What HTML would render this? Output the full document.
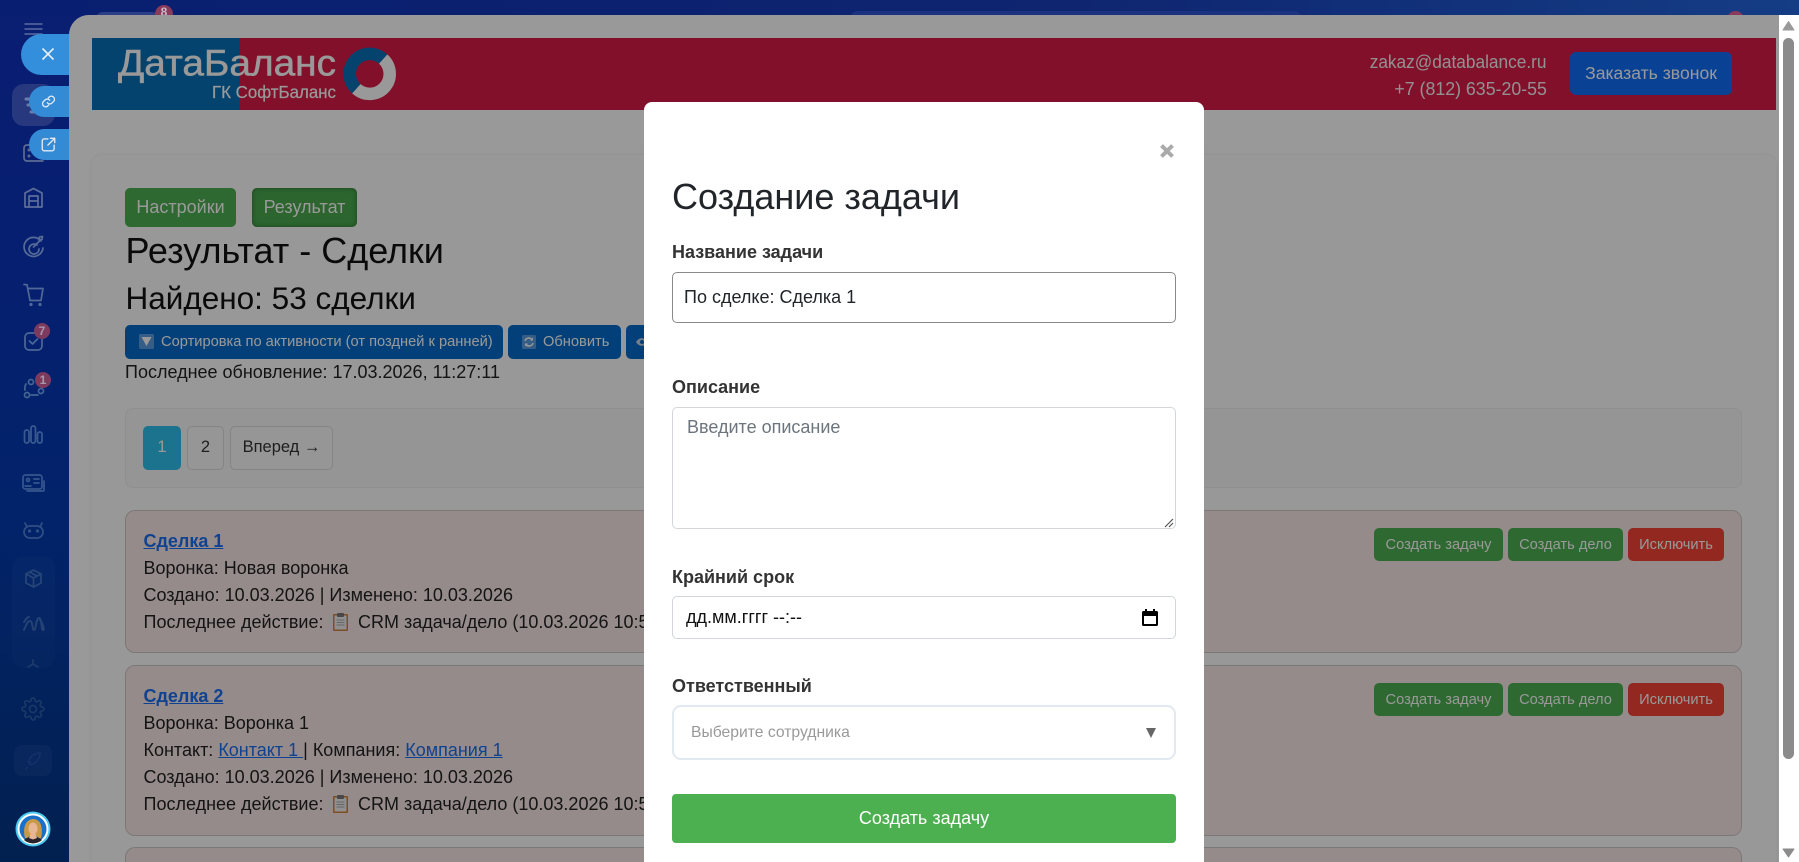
<!DOCTYPE html>
<html lang="ru">
<head>
<meta charset="utf-8">
<title>Создание задачи</title>
<style>
html,body{margin:0;padding:0;width:1799px;height:862px;overflow:hidden;background:#061d6e;font-family:"Liberation Sans",Arial,sans-serif}
*{box-sizing:border-box}
.a{position:absolute;white-space:nowrap}
#bg{position:absolute;left:0;top:0;width:1799px;height:862px;background:linear-gradient(180deg,#0a1e72 0,#061f70 30%,#02236a 60%,#02204f 100%)}
#topglow{position:absolute;left:0;top:0;width:1799px;height:15px;background:linear-gradient(90deg,#081e70 0,#0f2570 60%,#143d85 100%)}
#panel{position:absolute;left:69px;top:15px;width:1710px;height:847px;background:#fff;overflow:hidden;border-top-left-radius:20px}
#in{position:absolute;left:-69px;top:-15px;width:1799px;height:862px}
#ov{position:absolute;left:0;top:0;width:1799px;height:862px;background:rgba(0,0,0,.4)}
.btn{position:absolute;color:#fff;text-align:center;border-radius:5px;font-size:14.67px}
.card{position:absolute;left:125px;width:1617px;background:#fbe8e8;border:1px solid #d0c8c8;border-radius:10px}
.t{position:absolute;white-space:nowrap;color:#222;font-size:18px;line-height:26px;left:143.5px}
.t a,.lnk{color:#1a6ff0;text-decoration:underline}
.g{background:#4caf50}.r{background:#f44336}.bl{background:#066ccb}
.lab{position:absolute;left:672px;font-weight:bold;font-size:18px;line-height:24px;color:#333;white-space:nowrap}
.inp{position:absolute;left:672px;width:504px;background:#fff;border:1px solid #d2d6db;border-radius:5px}
</style>
</head>
<body>
<div id="bg"></div>
<div id="topglow"></div>

<!-- strip items peeking above panel -->
<div class="a" style="left:95px;top:12px;width:65px;height:10px;background:#2b3f86;border-radius:8px 8px 0 0"></div>
<div class="a" style="left:155px;top:5px;width:18px;height:18px;border-radius:50%;background:#8a3a5a;color:#c8b8c8;font-size:12px;font-weight:bold;line-height:15px;text-align:center">8</div>
<div class="a" style="left:850px;top:11px;width:452px;height:8px;background:#1b3280;border-radius:8px 8px 0 0"></div>
<div class="a" style="left:1727px;top:11px;width:17px;height:17px;border-radius:50%;background:#8a3a5a"></div>

<!-- sidebar -->
<svg class="a" style="left:0;top:0" width="69" height="862" viewBox="0 0 69 862">
  <g fill="none" stroke-linecap="round" stroke-linejoin="round" stroke-width="1.7">
    <g stroke="#5a6ca2" stroke-width="1.4"><path d="M25 24h17M25 29h17M25 34h17"/></g>
    <rect x="12" y="84" width="43" height="42" rx="12" fill="#27387f" stroke="none"/>
    <g stroke="#6b7ca8" stroke-width="3"><path d="M26 99h6M28 105h8M31 112h6"/></g>
    <g stroke="#5c6c94">
      <path d="M29 145h-2a3 3 0 0 0-3 3v10a3 3 0 0 0 3 3h16"/><circle cx="29" cy="150" r=".6"/><circle cx="29" cy="156" r=".6"/>
    </g>
    <g stroke="#5d6e98">
      <path d="M25 207v-14l8.500-4.500 8.500 4.500v14H25z"/><path d="M29 207v-11h9v11M29 201h9"/>
    </g>
    <g stroke="#566b97">
      <path d="M41 241a9.500 9.500 0 1 0 2 7"/><path d="M37 245a5 5 0 1 0 2 4"/><path d="M33.500 247l7-7M39 240l.500-3 3-.500-.500 3-3 .500"/>
    </g>
    <g stroke="#516997"><path d="M24 284.500l3 .200 3 15.800h11l2-12H28"/><circle cx="31" cy="304.500" r=".8"/><circle cx="40" cy="304.500" r=".8"/></g>
    <g stroke="#4c6897">
      <rect x="25" y="333" width="17" height="17" rx="4"/><path d="M29.500 341l3 3 5-5"/>
    </g>
    <g stroke="#456494">
      <path d="M26 384a8 8 0 0 0-1 6M31 395h7M42 388a9 9 0 0 0-5-6"/><circle cx="31" cy="382" r="2.500"/><circle cx="27" cy="395" r="2.500"/><circle cx="41" cy="391" r="2.500"/>
    </g>
    <g stroke="#3a5b90">
      <rect x="24.500" y="430" width="4.500" height="13" rx="2.200"/><rect x="31" y="426" width="4.500" height="17" rx="2.200"/><rect x="37.500" y="432" width="4.500" height="11" rx="2.200"/>
    </g>
    <g stroke="#35568c">
      <rect x="23" y="475" width="19" height="14" rx="2.500"/><path d="M44 481v9a1 1 0 0 1-1 1H27"/><circle cx="28" cy="480" r="1.500"/><path d="M25 486h6M34 479h5M34 483h5"/>
    </g>
    <g stroke="#2f4f84">
      <rect x="24" y="526" width="19" height="12" rx="6"/><path d="M27 527l-2-4M40 527l2-4"/><circle cx="29.500" cy="531" r=".8"/><circle cx="37.500" cy="531" r=".8"/>
    </g>
    <rect x="12" y="556" width="43" height="112" rx="12" fill="#fff" fill-opacity=".015" stroke="none"/>
    <g stroke="#264678">
      <path d="M33.500 570l7.500 4v9l-7.500 4-7.500-4v-9z"/><path d="M26 574l7.500 4 7.500-4M33.500 578v9M29.500 572l7.500 4"/>
    </g>
    <g stroke="#254274" stroke-width="2">
      <path d="M24 630c2-4 3-9 6-9s2 9 4 9 2-12 5-12 2 12 4 12-1-8-3-10M24 622c2-3 3-5 5-5"/>
    </g>
    <g stroke="#1c3a6c"><path d="M28 667l5-3 5 3M33 664v-4"/></g>
    <g stroke="#1a3866" transform="translate(21 697)">
      <circle cx="12" cy="12" r="3.500"/>
      <path d="M19.400 15a1.650 1.650 0 0 0 .330 1.820l.060.060a2 2 0 0 1 0 2.830 2 2 0 0 1-2.830 0l-.060-.060a1.650 1.650 0 0 0-1.820-.330 1.650 1.650 0 0 0-1 1.510V21a2 2 0 0 1-2 2 2 2 0 0 1-2-2v-.090A1.650 1.650 0 0 0 9 19.400a1.650 1.650 0 0 0-1.820.330l-.060.060a2 2 0 0 1-2.830 0 2 2 0 0 1 0-2.830l.060-.060a1.650 1.650 0 0 0 .330-1.820 1.650 1.650 0 0 0-1.510-1H3a2 2 0 0 1-2-2 2 2 0 0 1 2-2h.090A1.650 1.650 0 0 0 4.600 9a1.650 1.650 0 0 0-.330-1.820l-.060-.060a2 2 0 0 1 0-2.830 2 2 0 0 1 2.830 0l.060.060a1.650 1.650 0 0 0 1.820.330H9a1.650 1.650 0 0 0 1-1.510V3a2 2 0 0 1 2-2 2 2 0 0 1 2 2v.090a1.650 1.650 0 0 0 1 1.510 1.650 1.650 0 0 0 1.820-.330l.060-.060a2 2 0 0 1 2.830 0 2 2 0 0 1 0 2.830l-.060.060a1.650 1.650 0 0 0-.330 1.820V9a1.650 1.650 0 0 0 1.510 1H21a2 2 0 0 1 2 2 2 2 0 0 1-2 2h-.090a1.650 1.650 0 0 0-1.510 1z"/>
    </g>
    <rect x="14" y="745" width="38" height="31" rx="8" fill="#fff" fill-opacity=".03" stroke="none"/>
    <g stroke="#12306a"><path d="M40 753c-6 0-10 4-12 9l3 3c5-2 9-6 9-12zM27 767l-1 2M31 762l-3 0"/></g>
  </g>
</svg>

<!-- badges -->
<div class="a" style="left:34px;top:323px;width:16px;height:16px;border-radius:50%;background:#7d3a5e;color:#a898a8;font-size:12px;font-weight:bold;line-height:16px;text-align:center">7</div>
<div class="a" style="left:35px;top:372px;width:16px;height:16px;border-radius:50%;background:#7d3a5e;color:#a898a8;font-size:12px;font-weight:bold;line-height:16px;text-align:center">1</div>

<!-- avatar -->
<svg class="a" style="left:15px;top:811px" width="36" height="36" viewBox="0 0 36 36">
  <circle cx="18" cy="18" r="17.500" fill="#4ac8f0"/><circle cx="18" cy="18" r="15.500" fill="#fff"/>
  <circle cx="18" cy="18" r="13.500" fill="#1a6fc8"/>
  <path d="M10 27c-2-8-1-18 8-19 9 0 10 11 8 19-2 1-3 0-4-2h-8c-1 2-2 3-4 2z" fill="#c89a48"/>
  <ellipse cx="18" cy="17.500" rx="4.600" ry="6" fill="#e8b595"/>
  <path d="M9 29c3-3 6-3 9-3s6 0 9 3a13.500 13.500 0 0 1-18 0z" fill="#26232a"/>
  <path d="M15.500 23h5l1.500 4-4 1.500-4-1.500z" fill="#e8b595"/>
</svg>

<!-- pills -->
<div class="a" style="left:21px;top:34px;width:48px;height:41px;background:#338fdb;border-radius:21px 0 0 21px"></div>
<svg class="a" style="left:40px;top:46px" width="16" height="16" viewBox="0 0 16 16"><path d="M2.500 2.500l11 11M13.500 2.500l-11 11" stroke="#e6eef8" stroke-width="1.600" fill="none"/></svg>
<div class="a" style="left:29px;top:86px;width:40px;height:31px;background:#338ad5;border-radius:16px 0 0 16px"></div>
<svg class="a" style="left:41px;top:94px" width="15" height="15" viewBox="0 0 24 24" fill="none" stroke="#dfeaf6" stroke-width="2.200" stroke-linecap="round" stroke-linejoin="round"><path d="M10 14a5 5 0 0 0 7.500.500l3-3a5 5 0 0 0-7-7l-1.700 1.700"/><path d="M14 10a5 5 0 0 0-7.500-.500l-3 3a5 5 0 0 0 7 7l1.700-1.700"/></svg>
<div class="a" style="left:29px;top:129px;width:40px;height:31px;background:#338ad5;border-radius:16px 0 0 16px"></div>
<svg class="a" style="left:41px;top:137px" width="15" height="15" viewBox="0 0 24 24" fill="none" stroke="#dfeaf6" stroke-width="2.200" stroke-linecap="round" stroke-linejoin="round"><path d="M11 3H5a3 3 0 0 0-3 3v13a3 3 0 0 0 3 3h13a3 3 0 0 0 3-3v-6"/><path d="M15 2h7v7M22 2L11 13"/></svg>

<!-- scrollbar -->
<div class="a" style="left:1779px;top:15px;width:20px;height:847px;background:#fff"></div>
<svg class="a" style="left:1779px;top:15px" width="20" height="847" viewBox="0 0 20 847">
  <path d="M9.500 6.500L15 15H4z" fill="#9a9a9a" stroke="#9a9a9a" stroke-linejoin="round"/>
  <rect x="4" y="23" width="11" height="721" rx="5.500" fill="#8b8b8b"/>
  <path d="M9.500 842L15 834H4z" fill="#8b8b8b" stroke="#8b8b8b" stroke-linejoin="round"/>
</svg>

<div id="panel"><div id="in">
  <!-- header -->
  <div class="a" style="left:92px;top:38px;width:148px;height:72px;background:#0871b8"></div>
  <div class="a" style="left:240px;top:38px;width:1536px;height:72px;background:#da1c46"></div>
  <svg class="a" style="left:92px;top:38px" width="340" height="72" viewBox="0 0 340 72">
    <text x="26" y="37.500" font-family="Liberation Sans" font-size="37" fill="#fff" stroke="#fff" stroke-width=".5" textLength="218" lengthAdjust="spacingAndGlyphs">ДатаБаланс</text>
    <text x="120" y="60" font-family="Liberation Sans" font-size="17.500" fill="#fff" stroke="#fff" stroke-width=".2" textLength="124" lengthAdjust="spacingAndGlyphs">ГК СофтБаланс</text>
    <g transform="translate(-.7 -.5)">
      <path d="M291.800 21.500A20 20 0 1 1 265 51.200" fill="none" stroke="#fff" stroke-width="12.500"/>
      <path d="M291.800 21.500A20 20 0 1 0 265 51.200" fill="none" stroke="#0871b8" stroke-width="12.500"/>
    </g>
  </svg>
  <div class="a" style="right:252px;top:50px;font-size:18.500px;line-height:24px;color:#f2f2f2;transform:scaleX(.933);transform-origin:right center">zakaz@databalance.ru</div>
  <div class="a" style="right:252px;top:77px;font-size:18.500px;line-height:24px;color:#f2f2f2;transform:scaleX(.96);transform-origin:right center">+7 (812) 635-20-55</div>
  <div class="btn" style="left:1570px;top:52px;width:162px;height:43px;background:#106ef7;line-height:43px;font-size:17.600px;border-radius:6px">Заказать звонок</div>

  <!-- container -->
  <div class="a" style="left:92px;top:155px;width:1684px;height:760px;background:#fdfdfd;border-radius:10px;box-shadow:0 0 4px rgba(0,0,0,.07)"></div>

  <div class="btn g" style="left:125px;top:188px;width:111px;height:39px;line-height:38px;font-size:18px">Настройки</div>
  <div class="btn" style="left:252px;top:188px;width:105px;height:39px;line-height:38px;font-size:18px;background:#4aa84e;box-shadow:inset 0 0 5px rgba(0,0,0,.35)">Результат</div>

  <div class="a" style="left:125.500px;top:230px;font-size:36px;line-height:42px;color:#111">Результат - Сделки</div>
  <div class="a" style="left:125.500px;top:279px;font-size:31.500px;line-height:38px;color:#111">Найдено: 53 сделки</div>

  <div class="btn bl" style="left:125px;top:325px;width:378px;height:34px;line-height:34px;text-align:left;padding-left:36px">Сортировка по активности (от поздней к ранней)</div>
  <svg class="a" style="left:139px;top:334px" width="15" height="15" viewBox="0 0 15 15"><rect width="15" height="15" rx="1.500" fill="#5a9ce0"/><path d="M2.500 3h10l-5 9z" fill="#fff"/></svg>
  <div class="btn bl" style="left:508px;top:325px;width:113px;height:34px;line-height:34px;text-align:left;padding-left:35px">Обновить</div>
  <svg class="a" style="left:522px;top:335px" width="14" height="14" viewBox="0 0 14 14"><rect width="14" height="14" rx="1.500" fill="#5a9ce0"/><path d="M3 6a4 4 0 0 1 7-1.500M11 8a4 4 0 0 1-7 1.500" stroke="#fff" stroke-width="1.500" fill="none"/><path d="M11 2.500v3H8zM3 11.500v-3h3z" fill="#fff"/></svg>
  <div class="btn bl" style="left:626px;top:325px;width:120px;height:34px"></div>
  <svg class="a" style="left:636px;top:336px" width="14" height="12" viewBox="0 0 14 12"><path d="M0 6c3-5 8-5 12 0-4 5-9 5-12 0z" fill="#c8d4e4"/><circle cx="6" cy="6" r="2" fill="#066ccb"/></svg>
  <div class="a" style="left:125px;top:359px;font-size:18px;line-height:26px;color:#222">Последнее обновление: 17.03.2026, 11:27:11</div>

  <!-- pagination -->
  <div class="a" style="left:125px;top:408px;width:1617px;height:80px;background:#f8f8f8;border:1px solid #eee;border-radius:8px"></div>
  <div class="a" style="left:143px;top:426px;width:38px;height:44px;background:#30c0ec;border-radius:5px;color:#fff;font-size:16.500px;line-height:43px;text-align:center">1</div>
  <div class="a" style="left:187px;top:426px;width:37px;height:44px;background:#fafafa;border:1px solid #ddd;border-radius:5px;color:#333;font-size:16.500px;line-height:41px;text-align:center">2</div>
  <div class="a" style="left:230px;top:426px;width:103px;height:44px;background:#fafafa;border:1px solid #ddd;border-radius:5px;color:#333;font-size:16.500px;line-height:41px;text-align:center">Вперед →</div>

  <!-- deal 1 -->
  <div class="card" style="top:510px;height:143px"></div>
  <div class="t" style="top:528px;font-weight:bold"><a>Сделка 1</a></div>
  <div class="t" style="top:555px">Воронка: Новая воронка</div>
  <div class="t" style="top:582px">Создано: 10.03.2026 | Изменено: 10.03.2026</div>
  <div class="t" style="top:609px">Последнее действие:</div>
  <svg class="a" style="left:333px;top:613px" width="15" height="18" viewBox="0 0 15 18"><rect y="1" width="15" height="17" rx="1" fill="#d0803c"/><rect x="1.500" y="2.500" width="12" height="14" fill="#eee"/><rect x="4" width="7" height="4" rx="1" fill="#777"/><path d="M3.500 7h8M3.500 9.500h8M3.500 12h8" stroke="#aaa"/></svg>
  <div class="t" style="top:609px;left:358px">CRM задача/дело (10.03.2026 10:55)</div>
  <div class="btn g" style="left:1374px;top:528px;width:129px;height:33px;line-height:34px">Создать задачу</div>
  <div class="btn g" style="left:1508px;top:528px;width:115px;height:33px;line-height:34px">Создать дело</div>
  <div class="btn r" style="left:1628px;top:528px;width:96px;height:33px;line-height:34px">Исключить</div>

  <!-- deal 2 -->
  <div class="card" style="top:665px;height:171px"></div>
  <div class="t" style="top:683px;font-weight:bold"><a>Сделка 2</a></div>
  <div class="t" style="top:710px">Воронка: Воронка 1</div>
  <div class="t" style="top:737px">Контакт: <a>Контакт 1 </a>| Компания: <a>Компания 1</a></div>
  <div class="t" style="top:764px">Создано: 10.03.2026 | Изменено: 10.03.2026</div>
  <div class="t" style="top:791px">Последнее действие:</div>
  <svg class="a" style="left:333px;top:795px" width="15" height="18" viewBox="0 0 15 18"><rect y="1" width="15" height="17" rx="1" fill="#d0803c"/><rect x="1.500" y="2.500" width="12" height="14" fill="#eee"/><rect x="4" width="7" height="4" rx="1" fill="#777"/><path d="M3.500 7h8M3.500 9.500h8M3.500 12h8" stroke="#aaa"/></svg>
  <div class="t" style="top:791px;left:358px">CRM задача/дело (10.03.2026 10:55)</div>
  <div class="btn g" style="left:1374px;top:683px;width:129px;height:33px;line-height:34px">Создать задачу</div>
  <div class="btn g" style="left:1508px;top:683px;width:115px;height:33px;line-height:34px">Создать дело</div>
  <div class="btn r" style="left:1628px;top:683px;width:96px;height:33px;line-height:34px">Исключить</div>

  <!-- deal 3 -->
  <div class="card" style="top:847px;height:15px;border-bottom:0;border-radius:10px 10px 0 0"></div>

  <div id="ov"></div>

  <!-- modal -->
  <div class="a" style="left:644px;top:102px;width:560px;height:760px;background:#fff;border-radius:8px 8px 0 0"></div>
  <svg class="a" style="left:1159px;top:143px" width="16" height="16" viewBox="0 0 16 16"><path d="M2.500 2.500l11 11M13.500 2.500l-11 11" stroke="#aaa" stroke-width="4" fill="none"/></svg>
  <div class="a" style="left:672px;top:175px;font-size:36px;line-height:44px;color:#212529">Создание задачи</div>

  <div class="lab" style="top:240px">Название задачи</div>
  <div class="inp" style="top:272px;height:51px;border-color:#8a8a8a;color:#212529;font-size:18px;line-height:49px;padding-left:11px">По сделке: Сделка 1</div>

  <div class="lab" style="top:375px">Описание</div>
  <div class="inp" style="top:407px;height:122px;color:#6c757d;font-size:18px;line-height:24px;padding:7px 0 0 14px">Введите описание</div>
  <svg class="a" style="left:1163px;top:517px" width="12" height="11" viewBox="0 0 12 11"><path d="M2 10l8-8M6 10l4-4" stroke="#555" stroke-width="1.200" fill="none"/></svg>

  <div class="lab" style="top:565px">Крайний срок</div>
  <div class="inp" style="top:596px;height:43px;color:#111;font-size:18px;line-height:41px;padding-left:13px">дд.мм.гггг --:--</div>
  <svg class="a" style="left:1142px;top:609px" width="16" height="17" viewBox="0 0 16 17"><path d="M3 0h2v2h6V0h2v2h1.500A1.500 1.500 0 0 1 16 3.500v12a1.500 1.500 0 0 1-1.500 1.500h-13A1.500 1.500 0 0 1 0 15.500v-12A1.500 1.500 0 0 1 1.500 2H3zM2 7v8h12V7z" fill="#000"/></svg>

  <div class="lab" style="top:674px">Ответственный</div>
  <div class="a" style="left:672px;top:705px;width:504px;height:55px;background:#fff;border:2px solid #e2e8f0;border-radius:9px"></div>
  <div class="a" style="left:691px;top:721px;font-size:15.700px;line-height:24px;color:#999">Выберите сотрудника</div>
  <svg class="a" style="left:1145px;top:727px" width="12" height="12" viewBox="0 0 12 12"><path d="M1 1h10L6 11z" fill="#666"/></svg>

  <div class="a" style="left:672px;top:794px;width:504px;height:49px;background:#4caf50;border-radius:4px;color:#fff;font-size:18px;line-height:48px;text-align:center">Создать задачу</div>
</div></div>
</body>
</html>
